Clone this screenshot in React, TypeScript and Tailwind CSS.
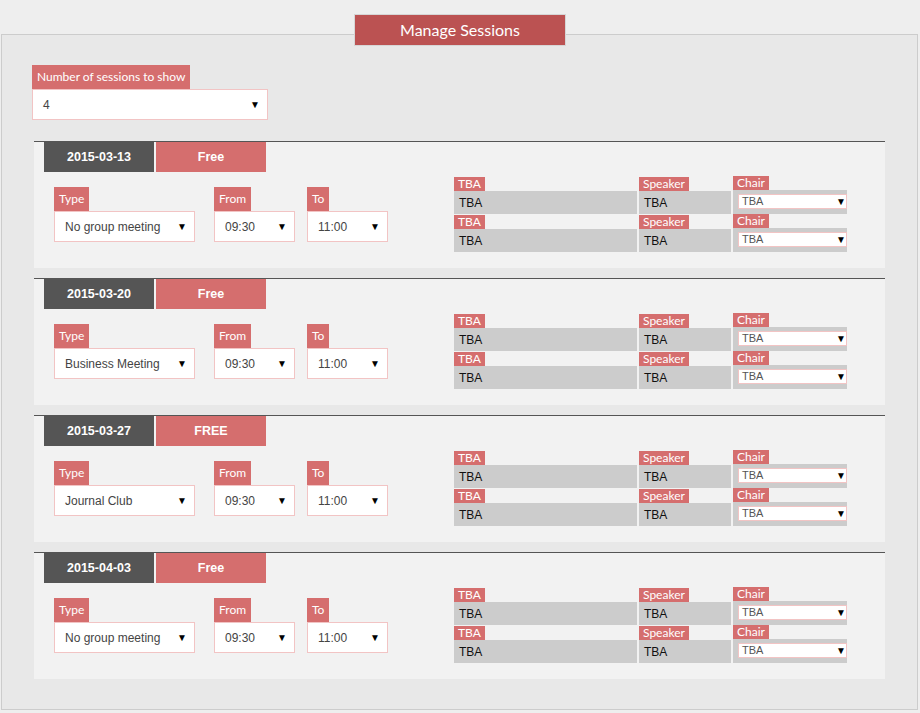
import React from 'react';

type Session = {
  date: string;
  status: string;
  type: string;
};

const sessions: Session[] = [
  { date: '2015-03-13', status: 'Free', type: 'No group meeting' },
  { date: '2015-03-20', status: 'Free', type: 'Business Meeting' },
  { date: '2015-03-27', status: 'FREE', type: 'Journal Club' },
  { date: '2015-04-03', status: 'Free', type: 'No group meeting' },
];

// fake select box: white field with pink border and a black arrow
function SelectBox({ value, className }: { value: string; className: string }) {
  return (
    <div
      className={`flex items-center justify-between bg-white border border-[#f2c4c4] pl-[10px] pr-[7px] font-['Liberation_Sans',Arial,sans-serif] text-[12px] text-[#444] ${className}`}
    >
      <span>{value}</span>
      <span className="text-[10px] leading-none text-black">▼</span>
    </div>
  );
}

function FieldLabel({ children }: { children: React.ReactNode }) {
  return (
    <div className="self-start h-[24px] px-[5px] leading-[24px] text-[12px] text-white bg-[#d56e6e]">
      {children}
    </div>
  );
}

function SmallLabel({ children }: { children: React.ReactNode }) {
  return (
    <div className="self-start h-[14px] px-[4px] leading-[14px] text-[12px] text-white bg-[#d56e6e]">
      {children}
    </div>
  );
}

function GreyCell() {
  return (
    <div className="h-[23px] bg-[#cccccc] pl-[5px] flex items-center font-['Liberation_Sans',Arial,sans-serif] text-[12px] text-[#111]">
      TBA
    </div>
  );
}

function ChairArea() {
  return (
    <div className="h-[24px] bg-[#cccccc] pl-[5px] pt-[4px]">
      <div className="h-[15px] bg-white border border-[#f2c4c4] pl-[3px] flex items-center justify-between font-['Liberation_Sans',Arial,sans-serif] text-[11px] text-[#555]">
        <span>TBA</span>
        <span className="text-[10px] leading-none text-black">▼</span>
      </div>
    </div>
  );
}

function SessionBlock({ session }: { session: Session }) {
  return (
    <div className="h-[127px] border-t border-[#555] bg-[#f2f2f2]">
      {/* Date + status tabs */}
      <div className="flex pl-[10px] gap-[2px] font-['Liberation_Sans',Arial,sans-serif] text-[12.5px] font-bold text-white">
        <div className="w-[110px] h-[30px] bg-[#555555] flex items-center justify-center">{session.date}</div>
        <div className="w-[110px] h-[30px] bg-[#d56e6e] flex items-center justify-center">{session.status}</div>
      </div>

      <div className="flex">
        {/* Type / From / To */}
        <div className="flex pl-[20px] pt-[15px]">
          <div className="flex flex-col w-[141px]">
            <FieldLabel>Type</FieldLabel>
            <SelectBox value={session.type} className="h-[31px]" />
          </div>
          <div className="flex flex-col w-[81px] ml-[19px]">
            <FieldLabel>From</FieldLabel>
            <SelectBox value="09:30" className="h-[31px]" />
          </div>
          <div className="flex flex-col w-[81px] ml-[12px]">
            <FieldLabel>To</FieldLabel>
            <SelectBox value="11:00" className="h-[31px]" />
          </div>
        </div>

        {/* Speakers table */}
        <div className="flex ml-[66px] gap-[2px]">
          <div className="flex flex-col w-[183px] mt-[5px]">
            <SmallLabel>TBA</SmallLabel>
            <GreyCell />
            <div className="h-[1px]" />
            <SmallLabel>TBA</SmallLabel>
            <GreyCell />
          </div>
          <div className="flex flex-col w-[92px] mt-[5px]">
            <SmallLabel>Speaker</SmallLabel>
            <GreyCell />
            <div className="h-[1px]" />
            <SmallLabel>Speaker</SmallLabel>
            <GreyCell />
          </div>
          <div className="flex flex-col w-[114px] mt-[4px]">
            <SmallLabel>Chair</SmallLabel>
            <ChairArea />
            <SmallLabel>Chair</SmallLabel>
            <ChairArea />
          </div>
        </div>
      </div>
    </div>
  );
}

export default function App() {
  return (
    <div className="min-h-[713px] bg-[#eeeeee] pt-[15px] font-['Lato',sans-serif]">
      {/* Legend-style title */}
      <div className="relative z-10 mx-auto w-[210px] h-[30px] bg-[#bb5252] shadow-[0_0_0_1px_#d6d6d6] flex items-center justify-center text-[16px] text-white">
        Manage Sessions
      </div>

      <div className="ml-[1px] -mt-[11px] w-[917px] border border-[#cccccc] bg-[#e8e8e8] pt-[30px] pb-[30px]">
        <div className="pl-[30px] flex flex-col">
          <FieldLabel>Number of sessions to show</FieldLabel>
          <SelectBox value="4" className="w-[236px] h-[31px]" />
        </div>

        <div className="px-[32px] mt-[21px] flex flex-col gap-[10px]">
          {sessions.map(s => (
            <SessionBlock key={s.date} session={s} />
          ))}
        </div>
      </div>
    </div>
  );
}
